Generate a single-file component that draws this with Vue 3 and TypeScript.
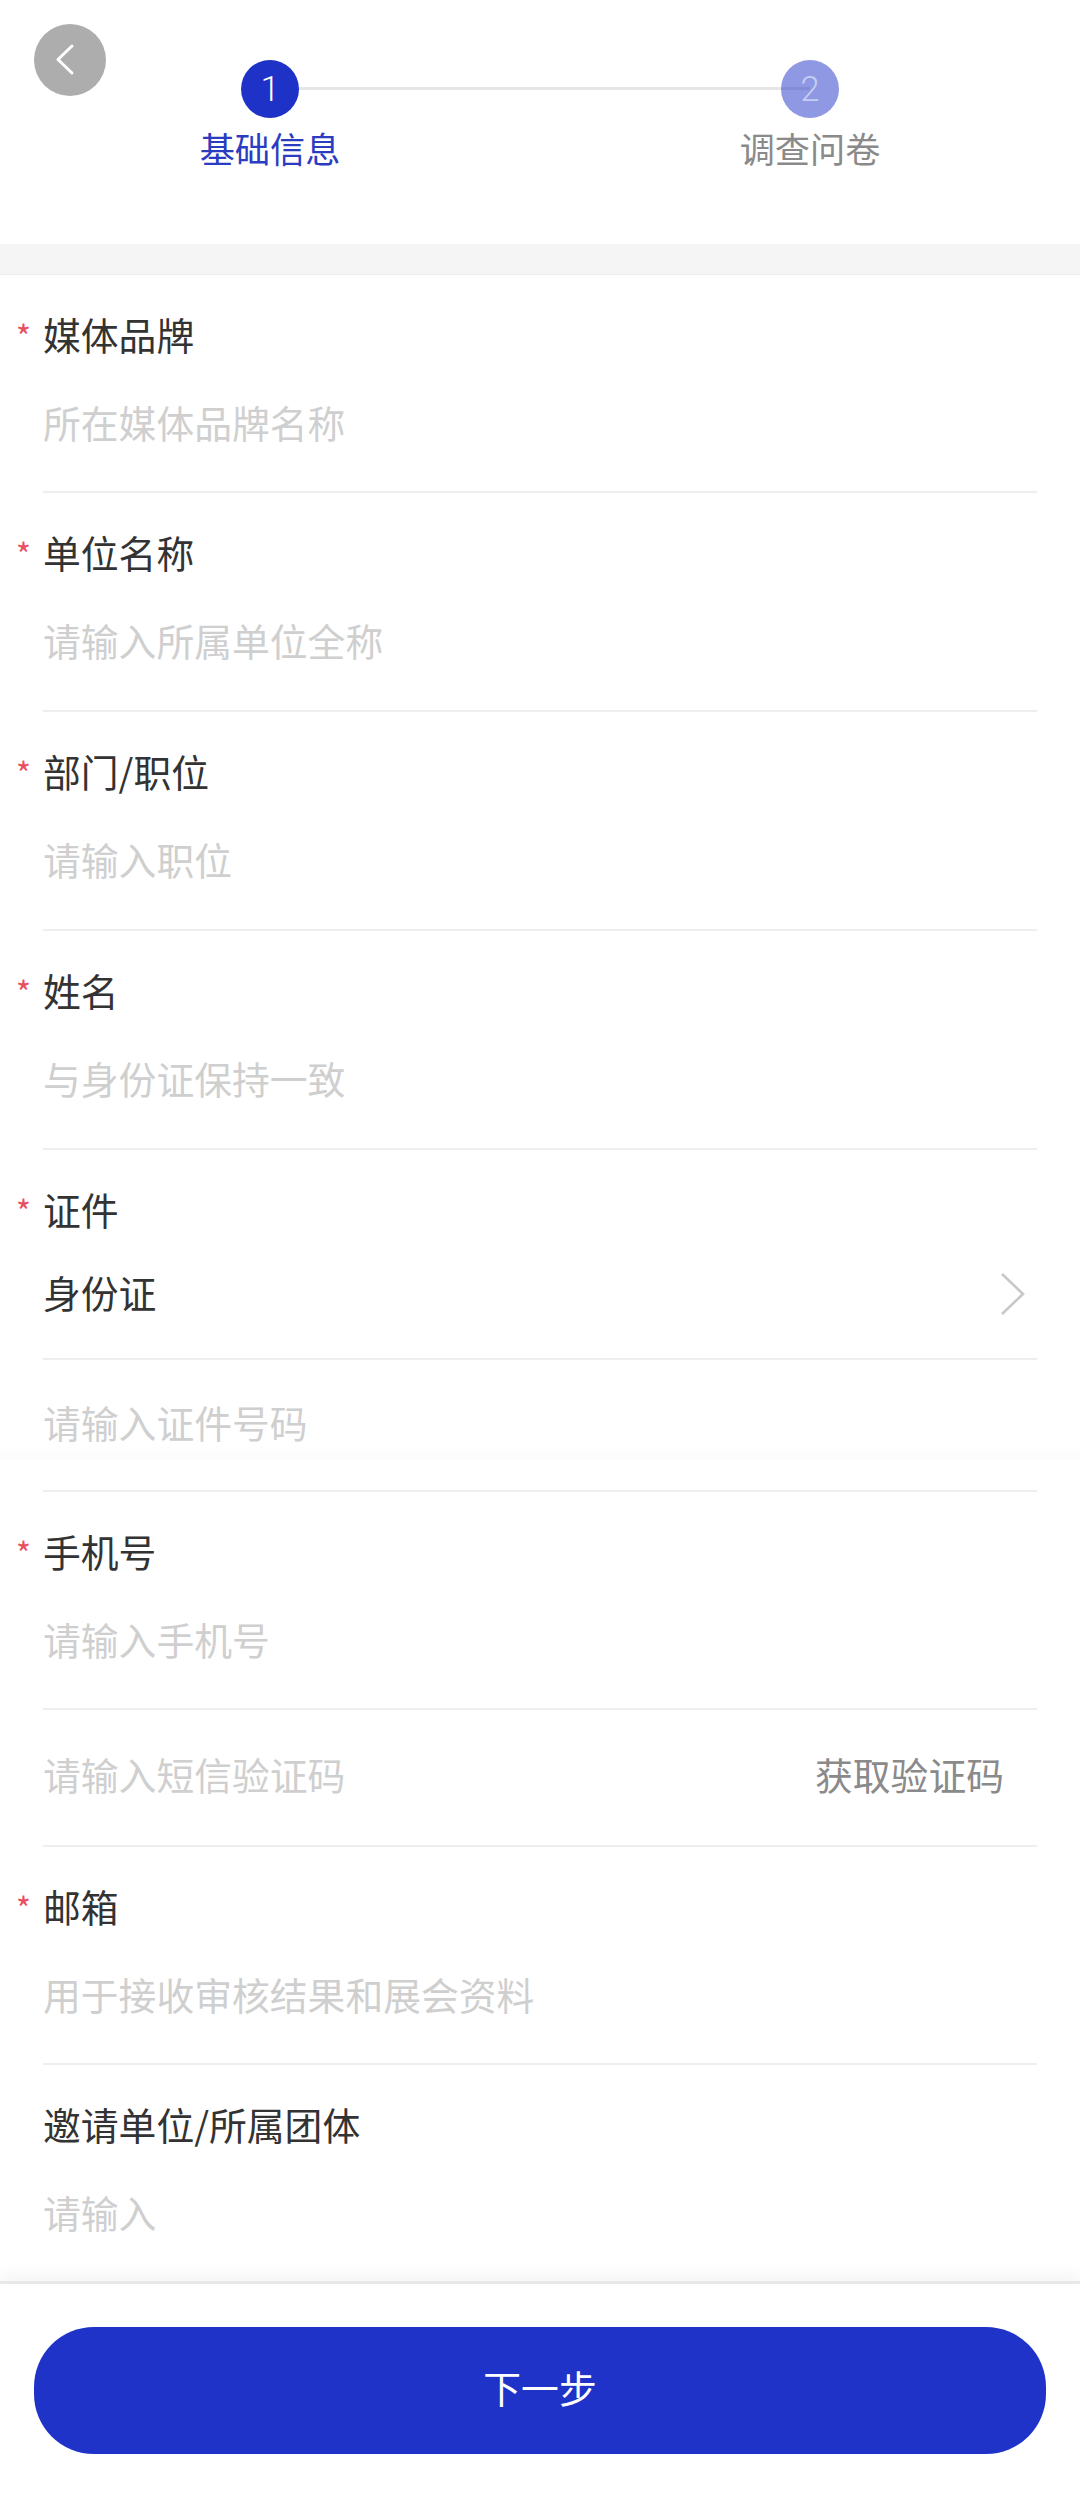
<template>
  <div class="page">
    <header class="steps-bar">
      <button class="back-btn" aria-label="返回">
        <svg width="72" height="72" viewBox="0 0 72 72">
          <path d="M38 22 L24 35.5 L38 49" fill="none" stroke="#fff" stroke-width="3" stroke-linecap="round" stroke-linejoin="round" />
        </svg>
      </button>
      <div class="steps">
        <div class="step active">
          <span class="step-num">1</span>
          <span class="step-name">基础信息</span>
        </div>
        <div class="step-line"></div>
        <div class="step">
          <span class="step-num">2</span>
          <span class="step-name">调查问卷</span>
        </div>
      </div>
    </header>

    <div class="band"></div>

    <main class="form">
      <div v-for="row in rows" :key="row.id" class="row" :class="[row.kind, row.id]">
        <div v-if="row.label" class="label">
          <span v-if="row.required" class="star">*</span>
          {{ row.label }}
        </div>
        <div class="control">
          <span :class="row.value ? 'value' : 'hint'">{{ row.value || row.hint }}</span>
          <svg v-if="row.arrow" class="arrow" width="26" height="44" viewBox="0 0 26 44">
            <path d="M2 2 L23 22 L2 42" fill="none" stroke="#c8c8c8" stroke-width="2.6" />
          </svg>
          <span v-if="row.action" class="action">{{ row.action }}</span>
        </div>
      </div>
    </main>

    <footer class="footer">
      <button class="next">下一步</button>
    </footer>
  </div>
</template>

<script setup lang="ts">
interface Row {
  id: string
  kind: 'full' | 'select' | 'sub' | 'last'
  label?: string
  required?: boolean
  hint?: string
  value?: string
  arrow?: boolean
  action?: string
}

const rows: Row[] = [
  { id: 'brand', kind: 'full', label: '媒体品牌', required: true, hint: '所在媒体品牌名称' },
  { id: 'company', kind: 'full', label: '单位名称', required: true, hint: '请输入所属单位全称' },
  { id: 'job', kind: 'full', label: '部门/职位', required: true, hint: '请输入职位' },
  { id: 'name', kind: 'full', label: '姓名', required: true, hint: '与身份证保持一致' },
  { id: 'cert', kind: 'select', label: '证件', required: true, value: '身份证', arrow: true },
  { id: 'certNo', kind: 'sub', hint: '请输入证件号码' },
  { id: 'phone', kind: 'full', label: '手机号', required: true, hint: '请输入手机号' },
  { id: 'code', kind: 'sub', hint: '请输入短信验证码', action: '获取验证码' },
  { id: 'mail', kind: 'full', label: '邮箱', required: true, hint: '用于接收审核结果和展会资料' },
  { id: 'invite', kind: 'last', label: '邀请单位/所属团体', hint: '请输入' },
]
</script>

<style>
html,
body {
  margin: 0;
  background: #fff;
}
</style>

<style scoped>
.page {
  height: 2497px;
  display: flex;
  flex-direction: column;
  font-family: 'Noto Sans CJK SC', 'Liberation Sans', sans-serif;
  font-size: 37.8px;
  color: #333;
  background: #fff;
  overflow: hidden;
}

.steps-bar {
  position: relative;
  height: 244px;
  flex-shrink: 0;
}

.back-btn {
  position: absolute;
  left: 34px;
  top: 24px;
  width: 72px;
  height: 72px;
  padding: 0;
  border: none;
  border-radius: 50%;
  background: #adadad;
}

.back-btn svg {
  display: block;
}

.steps {
  display: flex;
  align-items: flex-start;
  padding: 60px 0 0 180px;
}

.step {
  width: 180px;
  flex-shrink: 0;
  display: flex;
  flex-direction: column;
  align-items: center;
  color: #8a8a8a;
  font-size: 35.2px;
}

.step-num {
  width: 58px;
  height: 58px;
  border-radius: 50%;
  background: rgba(30, 50, 200, 0.5);
  color: #c6cdf3;
  font-family: Roboto, sans-serif;
  font-weight: 300;
  font-size: 34.56px;
  line-height: 58px;
  text-align: center;
  position: relative;
  z-index: 1;
}

.step-name {
  margin-top: 4px;
  line-height: 52px;
}

.step.active {
  color: #2a3cc0;
}

.step.active .step-num {
  background: #1f32c8;
  color: #fff;
}

.step-line {
  width: 540px;
  flex-shrink: 0;
  margin: 27px -90px 0;
  height: 3px;
  background: #e6e6e6;
}

.band {
  height: 31px;
  flex-shrink: 0;
  background: #f5f5f5;
  border-bottom: 1px solid #ececec;
  box-sizing: border-box;
}

.form {
  flex: 1;
  overflow: hidden;
  padding: 0 43px;
}

.row {
  position: relative;
  border-bottom: 2px solid #eeeeee;
  box-sizing: border-box;
}

.row.full {
  height: 219px;
}

.row.brand,
.row.phone,
.row.mail {
  height: 218px;
}

.row.select {
  height: 210px;
}

.row.sub {
  height: 132px;
}

.row.code {
  height: 137px;
}

.row.last {
  border-bottom: none;
}

/* faint seam across the page behind the id number row */
.row.certNo::before {
  content: '';
  position: absolute;
  left: -43px;
  right: -43px;
  top: 83px;
  height: 17px;
  background: linear-gradient(to bottom, #fff, #fcfcfc);
}

.label {
  position: relative;
  padding-top: 33px;
  line-height: 52px;
  color: #333;
}

.star {
  position: absolute;
  left: -27px;
  top: 34px;
  color: #e8505f;
  font-size: 32px;
  line-height: 52px;
}

.control {
  position: relative;
  display: flex;
  align-items: center;
  justify-content: space-between;
  height: 52px;
  line-height: 52px;
  padding-top: 36px;
}

.select .control {
  padding-top: 31px;
}

.sub .control {
  box-sizing: border-box;
  height: 100%;
  padding: 0 0 7px;
}

.hint {
  color: #cfcfcf;
}

.value {
  color: #333;
}

.arrow {
  margin: 4px 11px 0 0;
}

.action {
  color: #8a8a8a;
  margin-right: 33px;
}

.footer {
  flex-shrink: 0;
  height: 216px;
  box-sizing: border-box;
  padding: 43px 34px 0;
  background: #fff;
  border-top: 3px solid #e8e8e8;
  box-shadow: 0 -8px 14px rgba(0, 0, 0, 0.04);
  position: relative;
}

.next {
  display: block;
  width: 100%;
  height: 127px;
  padding: 0 0 8px;
  border: none;
  border-radius: 60px;
  background: #2033c8;
  color: #fff;
  font-family: inherit;
  font-size: 37.8px;
}
</style>
